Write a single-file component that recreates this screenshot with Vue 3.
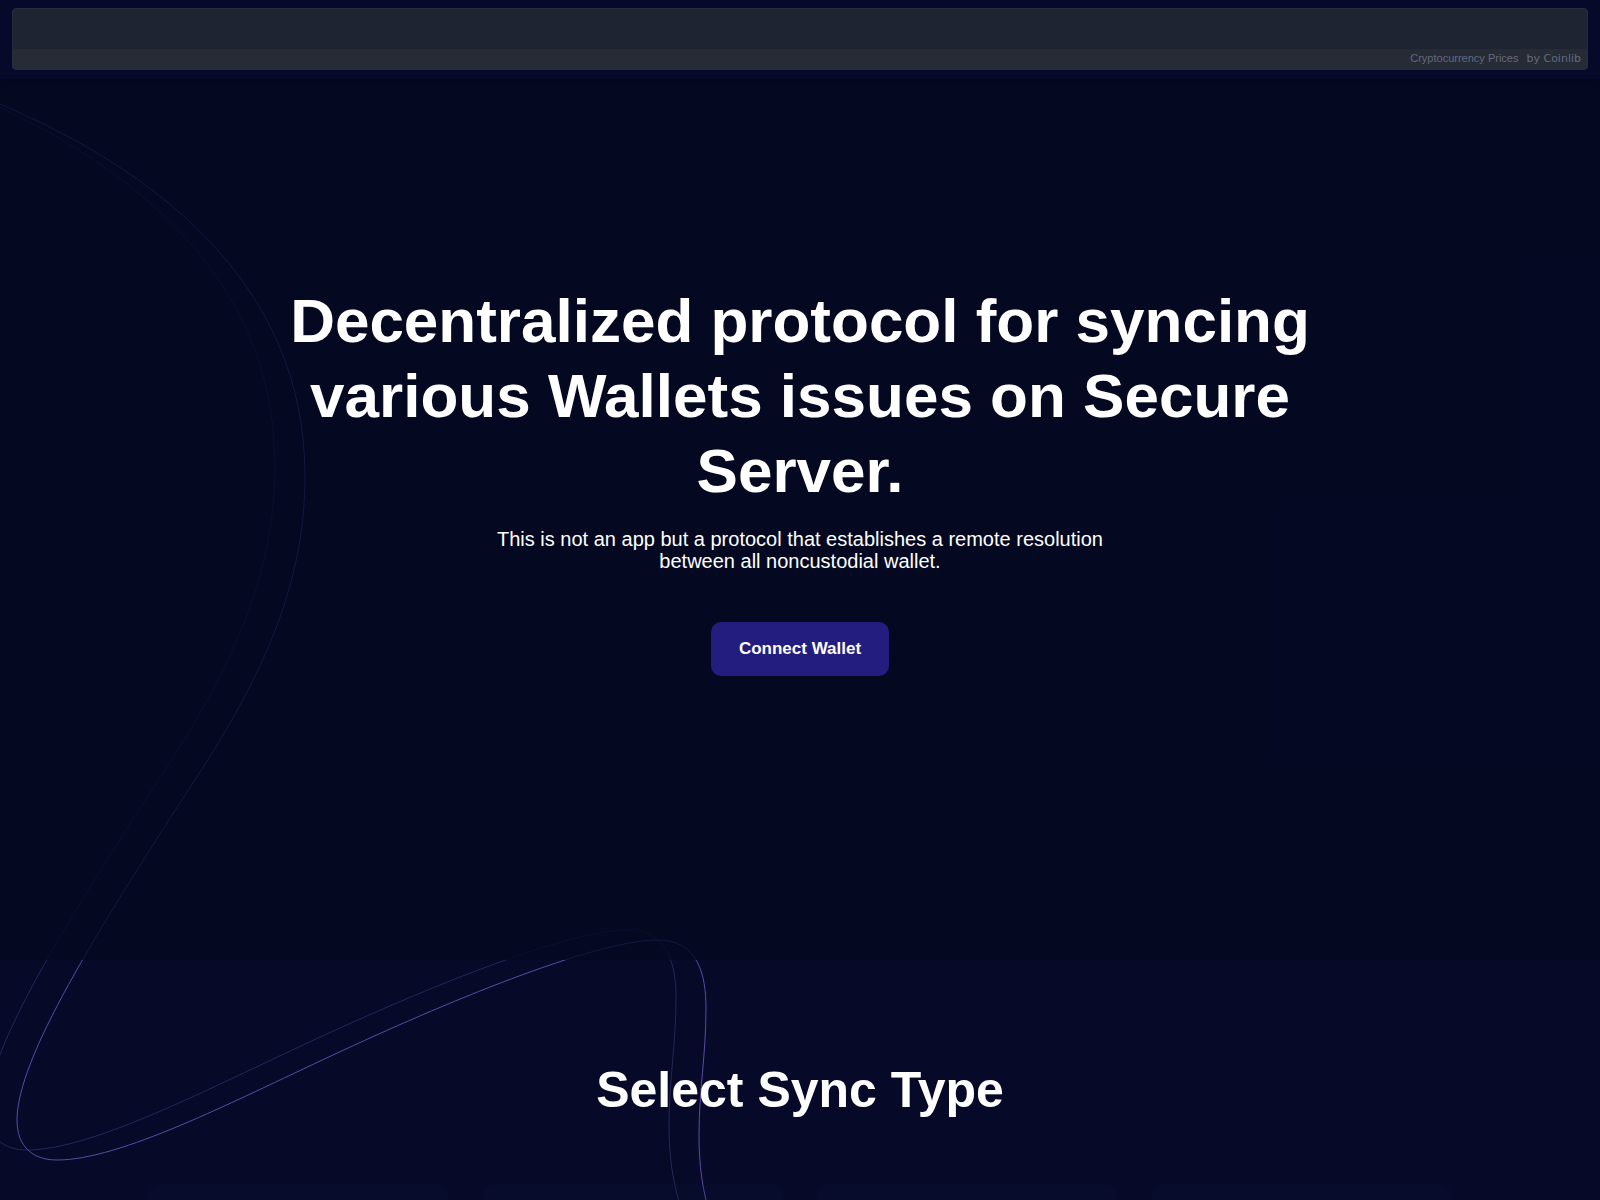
<script setup>
let cards = [1, 2, 3, 4]
</script>

<template>
    <div class="page">
        <svg class="lines" width="760" height="1200" viewBox="0 0 760 1200" aria-hidden="true">
            <defs>
                <path
                    id="wave"
                    d="M-40 88 Q-20 95 0 104 C150 168 305 280 305 476 C305 590 258 685 187 792 C98 930 17 1058 17 1120 C17 1146 32 1160 57 1160 C120 1160 230 1103 333 1055 C440 1005 594 940 658 940 C698 940 706 975 706 1008 C706 1055 699 1090 699 1135 C699 1165 702 1190 712 1222"
                />
            </defs>
            <use href="#wave" class="line" />
            <use href="#wave" class="line faint" x="-30" y="-10" />
        </svg>

        <header class="header">
            <div class="ticker">
                <div class="prices"></div>
                <p class="credit">
                    <a href="#">Cryptocurrency Prices</a>
                    <span>by Coinlib</span>
                </p>
            </div>
        </header>

        <section class="hero">
            <h1>Decentralized protocol for syncing various Wallets issues on Secure Server.</h1>
            <p>This is not an app but a protocol that establishes a remote resolution between all noncustodial wallet.</p>
            <button type="button">Connect Wallet</button>
        </section>

        <section class="sync">
            <h2>Select Sync Type</h2>
            <div class="cards">
                <div v-for="card in cards" :key="card" class="card"></div>
            </div>
        </section>
    </div>
</template>

<style>
body {
    margin: 0;
    background: #060a28;
}
</style>

<style scoped>
.page {
    position: relative;
    height: 100vh;
    overflow: hidden;
    color: #fff;
    font-family: "Liberation Sans", Arial, sans-serif;
}

/* the curves run behind every section */
.lines {
    position: absolute;
    top: 0;
    left: 0;
}

.line {
    fill: none;
    stroke: #5c49a6;
    stroke-width: 1;
}

.faint {
    opacity: 0.4;
}

.header {
    position: relative;
    padding: 8px 12px 9px;
    background: #060929;
    box-shadow: 0 2px 8px rgba(0, 0, 0, 0.15);
    z-index: 1;
}

.ticker {
    border: 1px solid #282d3a;
    border-radius: 4px;
    background: #262b36;
    overflow: hidden;
}

.prices {
    height: 40px;
    border-radius: 0 0 3px 3px;
    background: #1e2431;
}

.credit {
    display: flex;
    align-items: baseline;
    justify-content: flex-end;
    gap: 8px;
    margin: 0;
    padding: 0 6px 2px;
    font-size: 11px;
    line-height: 18px;
    color: #626a80;
}

.credit a {
    color: inherit;
    text-decoration: none;
}

.credit span {
    font-family: "DejaVu Sans", Verdana, sans-serif;
    line-height: 16px;
}

.hero {
    position: relative;
    display: flex;
    flex-direction: column;
    align-items: center;
    justify-content: center;
    min-height: 881px;
    box-sizing: border-box;
    padding: 0 20px 80px;
    background: rgba(4, 8, 32, 0.78);
    text-align: center;
}

h1 {
    max-width: 1100px;
    margin: 0;
    font-size: 62px;
    line-height: 75px;
}

.hero p {
    max-width: 640px;
    margin: 20px 0 50px;
    font-size: 20px;
    line-height: 22px;
}

button {
    padding: 17px 28px;
    border: none;
    border-radius: 10px;
    background: #241d80;
    color: #fff;
    font-family: inherit;
    font-size: 17px;
    font-weight: bold;
    line-height: 20px;
    cursor: pointer;
}

.sync {
    position: relative;
    padding: 100px 20px;
}

h2 {
    margin: 0 0 64px;
    font-size: 50px;
    line-height: 60px;
    text-align: center;
}

.cards {
    display: flex;
    justify-content: space-between;
    max-width: 1304px;
    margin: 0 auto;
}

.card {
    width: 300px;
    height: 320px;
    border-radius: 12px;
    background: rgba(20, 30, 80, 0.12);
}
</style>
